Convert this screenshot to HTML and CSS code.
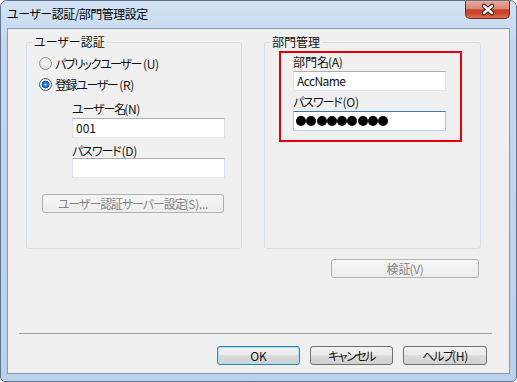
FILE: index.html
```html
<!DOCTYPE html>
<html lang="ja">
<head>
    <meta charset="UTF-8">
    <title>ユーザー認証/部門管理設定</title>
    <link rel="stylesheet" href="styles.css">
</head>
<body>
    <div class="window">
        <div class="titlebar">
            <span class="title">ユーザー認証/部門管理設定</span>
            <div class="close">
                <svg width="45" height="18" viewBox="0 0 45 18">
                    <path d="M19 5 L27 12 M27 5 L19 12" stroke="#3b1d16" stroke-width="4.5" stroke-linecap="round" fill="none"/>
                    <path d="M19 5 L27 12 M27 5 L19 12" stroke="#fff" stroke-width="2.4" stroke-linecap="round" fill="none"/>
                </svg>
            </div>
        </div>
        <div class="client">
            <div class="groups">
                <fieldset class="group group-user">
                    <legend>ユーザー認証</legend>
                    <div class="radio radio-first"><span class="radio-mark"></span>パブリックユーザー<span class="key">(U)</span></div>
                    <div class="radio radio-second"><span class="radio-mark checked"></span>登録ユーザー<span class="key">(R)</span></div>
                    <div class="field">
                        <div class="field-label label-name">ユーザー名<span class="key">(N)</span></div>
                        <div class="textbox">001</div>
                        <div class="field-label label-pass">パスワード<span class="key key-loose">(D)</span></div>
                        <div class="textbox"></div>
                    </div>
                    <button class="btn btn-server" disabled>ユーザー認証サーバー設定<span class="key">(S)...</span></button>
                </fieldset>
                <fieldset class="group group-dept">
                    <legend>部門管理</legend>
                    <div class="highlight">
                        <div class="field-label label-dept">部門名<span class="key">(A)</span></div>
                        <div class="textbox textbox-latin">AccName</div>
                        <div class="field-label label-dept-pass">パスワード<span class="key key-loose">(O)</span></div>
                        <div class="textbox textbox-focus">
                            <span class="dot"></span><span class="dot"></span><span class="dot"></span>
                            <span class="dot"></span><span class="dot"></span><span class="dot"></span>
                            <span class="dot"></span><span class="dot"></span><span class="dot"></span>
                        </div>
                    </div>
                </fieldset>
            </div>
            <div class="verify-row">
                <button class="btn btn-verify" disabled>検証<span class="key">(V)</span></button>
            </div>
            <div class="separator"></div>
            <div class="actions">
                <button class="btn btn-default">OK</button>
                <button class="btn btn-cancel">キャンセル</button>
                <button class="btn btn-help">ヘルプ<span class="key">(H)</span></button>
            </div>
        </div>
    </div>
</body>
</html>
```

FILE: styles.css
```css
body {
    margin: 0;
    font-family: "Noto Sans CJK JP", sans-serif;
    font-size: 12px;
    font-feature-settings: "palt";
    color: #111;
}
.key {
    margin-left: -1px;
    letter-spacing: -0.3px;
}
.key-loose {
    margin-left: 1px;
}
.window {
    width: 517px;
    height: 382px;
    box-sizing: border-box;
    display: flex;
    flex-direction: column;
    padding: 0 6px 7px 6px;
    border: 1px solid #60748c;
    border-radius: 7px 7px 5px 5px;
    background: linear-gradient(#d3e3f4, #c3d8ef 40px, #bad1eb);
}
.titlebar {
    height: 27px;
    display: flex;
    align-items: flex-start;
}
.title {
    margin: 6px 0 0 0;
    line-height: 14px;
    letter-spacing: -0.5px;
    color: #000;
}
.close {
    margin-left: auto;
    width: 45px;
    height: 18px;
    box-sizing: border-box;
    border: 1px solid #6e2a20;
    border-top: none;
    border-radius: 0 0 5px 5px;
    background: linear-gradient(#eaa89a 0%, #dd8876 45%, #c6402a 52%, #c9472f 75%, #e07457 100%);
    overflow: hidden;
}
.close svg {
    display: block;
    margin: 0 0 0 -1px;
}
.client {
    flex: 1;
    display: flex;
    flex-direction: column;
    border: 1px solid #8799ae;
    background: #f0f0f0;
}
.groups {
    display: flex;
    gap: 22px;
    margin: 6px 0 0 18px;
}
.group {
    margin: 0;
    padding: 0;
    height: 214px;
    box-sizing: border-box;
    border: 1px solid #d5dfe5;
    border-radius: 3px;
}
.group legend {
    margin-left: 5px;
    padding: 0 2px;
    line-height: 14px;
}
.group-user {
    width: 216px;
}
.group-dept {
    width: 217px;
}
.radio {
    display: flex;
    align-items: center;
    gap: 3px;
    height: 17px;
    margin-left: 12px;
    letter-spacing: -1.4px;
}
.radio-first {
    margin-top: 6px;
}
.radio-second {
    margin-top: 4px;
}
.radio-mark {
    width: 13px;
    height: 13px;
    box-sizing: border-box;
    border-radius: 50%;
    border: 1px solid #8e8f8f;
    background: radial-gradient(circle at 50% 40%, #fdfdfd, #cfcfcf);
}
.radio-mark.checked {
    border-color: #3c5f80;
    background: radial-gradient(circle, #a8dcff 0, #3a8ae0 1.5px, #0d4d9e 3.5px, #eef2f5 4.2px, #d6d9dc 100%);
}
.field {
    margin-left: 45px;
}
.field-label {
    line-height: 15px;
    letter-spacing: -1.1px;
}
.label-name {
    margin-top: 8px;
    margin-bottom: 2px;
}
.label-pass {
    margin-top: 5px;
}
.textbox {
    width: 153px;
    height: 20px;
    box-sizing: border-box;
    background: #fff;
    border: 1px solid;
    border-color: #abadb3 #dbdfe6 #e3e9ef #e2e3ea;
    padding-left: 3px;
    line-height: 18px;
}
.textbox-latin {
    letter-spacing: -0.6px;
}
.textbox-focus {
    display: flex;
    align-items: center;
    gap: 0.3px;
    padding-left: 2px;
    border-color: #3d7bad #a4c9e3 #b7d9ed #a4c9e3;
}
.dot {
    width: 10px;
    height: 10px;
    border-radius: 50%;
    background: #000;
}
.btn {
    height: 19px;
    box-sizing: border-box;
    padding: 0;
    border: 1px solid #707070;
    border-radius: 3px;
    background: linear-gradient(#f2f2f2 0, #ebebeb 50%, #dddddd 50%, #cfcfcf 100%);
    font: inherit;
    color: #111;
    line-height: 17px;
}
.btn:disabled {
    border-color: #adb2b5;
    background: linear-gradient(#f6f6f6, #ededed);
    color: #838383;
}
.btn-server {
    display: block;
    width: 182px;
    margin: 16px 0 0 15px;
    letter-spacing: -1.1px;
}
.highlight {
    width: 183px;
    height: 91px;
    box-sizing: border-box;
    margin: 2px 0 0 14px;
    padding-left: 12px;
    border: 2px solid #e6000a;
}
.label-dept {
    margin-top: 1px;
    margin-bottom: 2px;
    letter-spacing: 0;
}
.label-dept-pass {
    margin-top: 3px;
    margin-bottom: 2px;
}
.verify-row {
    display: flex;
    justify-content: flex-end;
    margin: 10px 30px 0 0;
}
.btn-verify {
    width: 148px;
}
.separator {
    height: 1px;
    margin: 55px 17px 0 11px;
    background: #a0a0a0;
}
.actions {
    display: flex;
    justify-content: flex-end;
    gap: 10px;
    margin: 12px 22px 0 0;
}
.actions .btn {
    width: 83px;
}
.actions .btn-help {
    width: 84px;
    letter-spacing: -1.2px;
}
.btn-cancel {
    letter-spacing: -1.5px;
}
.btn-default {
    border-color: #3c7fb1;
    box-shadow: inset 0 0 0 1px #a6e0fb;
}
```
